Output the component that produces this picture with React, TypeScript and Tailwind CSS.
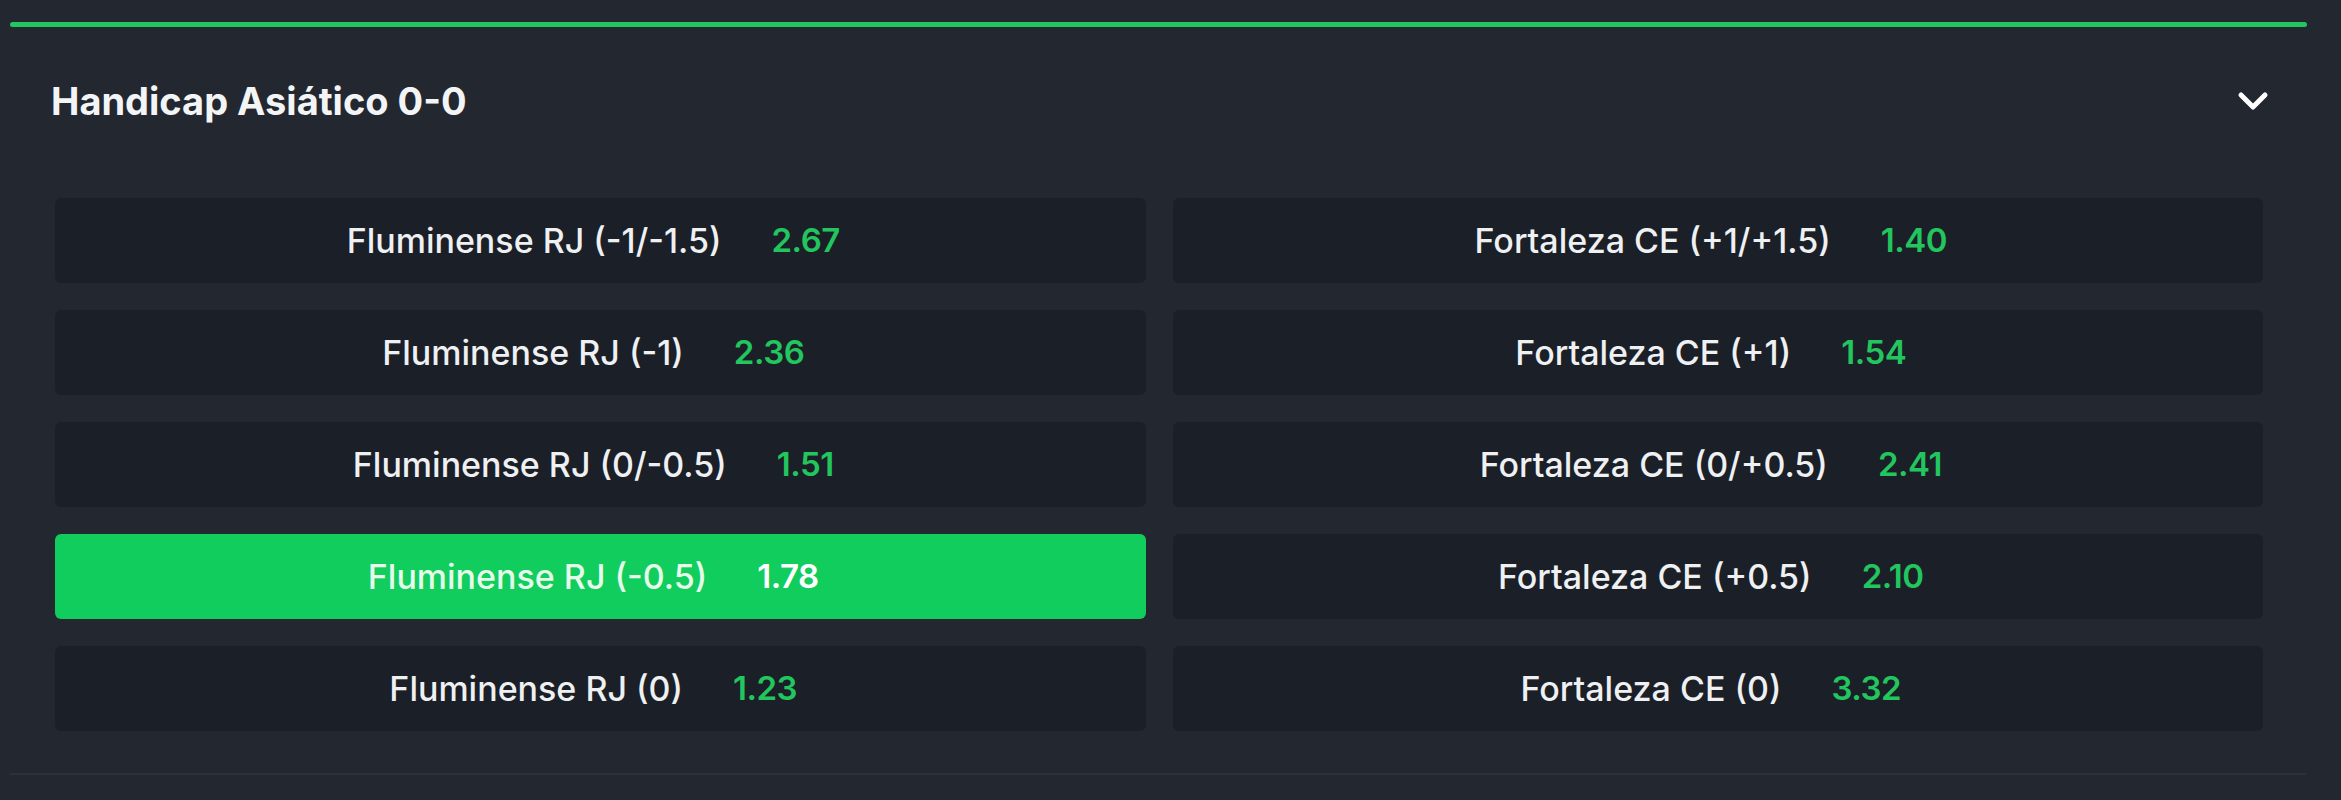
import React from 'react';

interface Selection {
  label: string;
  odds: string;
  selected?: boolean;
}

const home: Selection[] = [
  { label: 'Fluminense RJ (-1/-1.5)', odds: '2.67' },
  { label: 'Fluminense RJ (-1)', odds: '2.36' },
  { label: 'Fluminense RJ (0/-0.5)', odds: '1.51' },
  { label: 'Fluminense RJ (-0.5)', odds: '1.78', selected: true },
  { label: 'Fluminense RJ (0)', odds: '1.23' },
];

const away: Selection[] = [
  { label: 'Fortaleza CE (+1/+1.5)', odds: '1.40' },
  { label: 'Fortaleza CE (+1)', odds: '1.54' },
  { label: 'Fortaleza CE (0/+0.5)', odds: '2.41' },
  { label: 'Fortaleza CE (+0.5)', odds: '2.10' },
  { label: 'Fortaleza CE (0)', odds: '3.32' },
];

function OddsButton({ item }: { item: Selection }) {
  return (
    <button
      className={`flex h-[85px] items-center justify-center gap-[50px] rounded-md pr-[14px] ${
        item.selected ? 'bg-[#10cd5d]' : 'bg-[#1b1f27]'
      }`}
    >
      <span className={`text-[34px] font-medium ${item.selected ? 'text-[#e6fbe9]' : 'text-[#eef0f2]'}`}>
        {item.label}
      </span>
      <span className={`text-[33px] font-semibold tracking-[-0.5px] ${item.selected ? 'text-white' : 'text-[#22c55e]'}`}>
        {item.odds}
      </span>
    </button>
  );
}

export default function App() {
  const rows = home.map((h, i) => [h, away[i]]);

  return (
    <div className="h-[800px] w-full bg-[#232730] pt-[22px] font-['Inter',sans-serif]">
      <div className="mx-[10px] w-[2297px] border-b-2 border-[#2b303a]">
        {/* accent bar */}
        <div className="h-[5px] rounded-full bg-[#22c55e]" />

        {/* Market header */}
        <div className="flex h-[148px] items-center justify-between pl-[41px] pr-[38px]">
          <h2 className="text-[38px] font-bold text-[#f3f4f6]">Handicap Asiático 0-0</h2>
          <svg width="32" height="20" viewBox="0 0 32 20" fill="none">
            <path d="M4 4l12 12L28 4" stroke="#ffffff" strokeWidth="5" strokeLinecap="round" strokeLinejoin="round" />
          </svg>
        </div>

        {/* Selections */}
        <div className="grid grid-cols-2 gap-x-[27px] gap-y-[27px] pb-[42px] pl-[45px] pr-[44px] pt-[23px]">
          {rows.map(([h, a]) => (
            <React.Fragment key={h.label}>
              <OddsButton item={h} />
              <OddsButton item={a} />
            </React.Fragment>
          ))}
        </div>
      </div>
    </div>
  );
}
